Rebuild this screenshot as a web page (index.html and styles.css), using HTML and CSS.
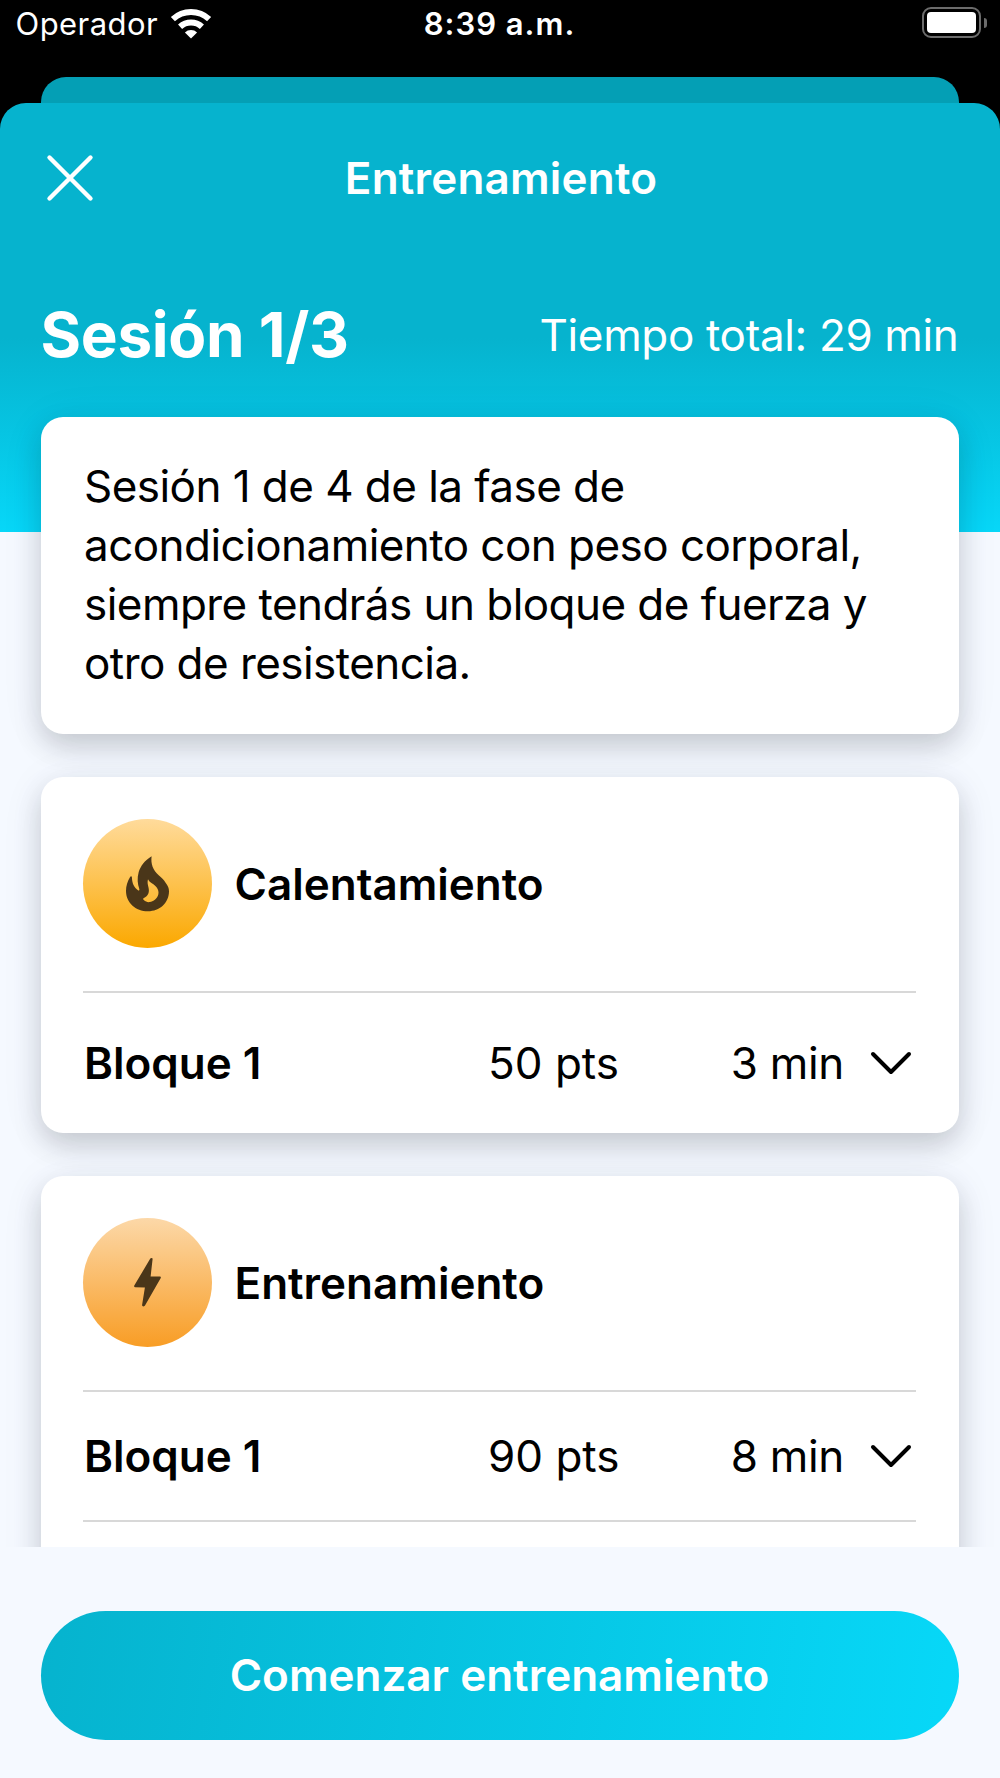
FILE: index.html
```
<!DOCTYPE html>
<html lang="es">
<head>
    <meta charset="UTF-8">
    <meta name="viewport" content="width=device-width, initial-scale=1.0">
    <title>Entrenamiento</title>
    <link rel="stylesheet" href="styles.css">
</head>
<body>
    <div class="screen">
        <div class="status-bar">
            <div class="carrier">
                <span>Operador</span>
                <svg class="wifi" width="42" height="32" viewBox="0 0 42 32">
                    <path d="M2.9 11.1a26.5 26.5 0 0 1 36.2 0M10.1 18.8a16 16 0 0 1 21.8 0" fill="none" stroke="#fff" stroke-width="6"/>
                    <path d="M21 30.5l-6.1-6.1a9 9 0 0 1 12.2 0z" fill="#fff"/>
                </svg>
            </div>
            <div class="clock">8:39 a.m.</div>
            <div class="battery">
                <div class="battery-body"><div class="battery-level"></div></div>
                <div class="battery-tip"></div>
            </div>
        </div>

        <div class="back-sheet"></div>

        <div class="sheet">
            <div class="nav">
                <svg class="close" width="48" height="48" viewBox="0 0 48 48">
                    <path d="M3.5 3.5l41 41M44.5 3.5l-41 41" stroke="#fff" stroke-width="4.4" stroke-linecap="round"/>
                </svg>
                <h1>Entrenamiento</h1>
            </div>

            <div class="content">
                <div class="session">
                    <h2>Sesión 1/3</h2>
                    <span class="total-time">Tiempo total: 29 min</span>
                </div>

                <div class="card description">
                    <p>Sesión 1 de 4 de la fase de acondicionamiento con peso corporal, siempre tendrás un bloque de fuerza y otro de resistencia.</p>
                </div>

                <div class="card">
                    <div class="card-header">
                        <div class="icon icon-warmup">
                            <svg width="43" height="56" viewBox="0 0 43 56">
                                <path fill-rule="evenodd" d="M25.6 0.2C24.6 8 27 14 32.7 19.3C36 22.4 38 24 39.6 26.7C42 30 43 32 43 35.3C43 47 33.5 55.3 22 55.3C9.5 55.3 0 46.5 0 35C0 30 1.5 25 4.1 21C4.6 20.1 5.8 20.1 5.9 21.2C6 27 8 31.5 12.3 34.5C13 34.9 13.7 34 13.3 33C11.5 28 11 22 12.7 16C14.6 10 18.5 4.5 25.6 0.2ZM22 23.3C21.2 26 21.7 28.5 22.5 31.5C23.6 36 22.5 40 17.5 42.3C16.8 43 17.2 43.6 17.8 44C19.8 45.6 21.5 46.5 24 46C29 44.8 32.5 41 32.5 36.5C32.5 32.5 29.5 29.5 26.2 27.5C24.2 26.3 23 25.3 22 23.3Z" fill="#4a3619"/>
                            </svg>
                        </div>
                        <h3>Calentamiento</h3>
                    </div>
                    <div class="block">
                        <span class="block-name">Bloque 1</span>
                        <span class="block-points">50 pts</span>
                        <span class="block-time">3 min</span>
                        <svg class="chevron" width="44" height="28" viewBox="0 0 44 28">
                            <path d="M4 5l18 18 18-18" fill="none" stroke="#000" stroke-width="4" stroke-linecap="round" stroke-linejoin="round"/>
                        </svg>
                    </div>
                </div>

                <div class="card">
                    <div class="card-header">
                        <div class="icon icon-training">
                            <svg width="27" height="49" viewBox="0 0 27 49">
                                <path d="M16 1Q16.5 0 17.5 0Q18.7 0 18.6 1L16.6 18.6L26 18.6Q27.3 18.8 26.6 20.3L11 47.6Q10.6 48.4 9.5 48.4Q7.9 48.4 8.1 47L10.9 29.4L1 29.2Q-.4 28.9 .3 27.6Z" fill="#4a3619"/>
                            </svg>
                        </div>
                        <h3>Entrenamiento</h3>
                    </div>
                    <div class="block">
                        <span class="block-name">Bloque 1</span>
                        <span class="block-points">90 pts</span>
                        <span class="block-time">8 min</span>
                        <svg class="chevron" width="44" height="28" viewBox="0 0 44 28">
                            <path d="M4 5l18 18 18-18" fill="none" stroke="#000" stroke-width="4" stroke-linecap="round" stroke-linejoin="round"/>
                        </svg>
                    </div>
                    <div class="block"></div>
                </div>
            </div>

            <div class="footer">
                <button class="start">Comenzar entrenamiento</button>
            </div>
        </div>
    </div>
</body>
</html>
```

FILE: styles.css
```
* {
    margin: 0;
    padding: 0;
    box-sizing: border-box;
}

body {
    font-family: Inter, Roboto, sans-serif;
    background: #000;
    color: #000;
}

.screen {
    width: 1000px;
    height: 1778px;
    display: flex;
    flex-direction: column;
    overflow: hidden;
    background: #000;
}

/* Status bar */
.status-bar {
    height: 76.5px;
    padding: 0 13.5px 0 15.5px;
    display: grid;
    grid-template-columns: 1fr auto 1fr;
    align-items: start;
    color: #fff;
    font-size: 31px;
    line-height: 47px;
}

.carrier {
    display: flex;
    gap: 12px;
    letter-spacing: 0.44px;
}

.wifi {
    margin-top: 7.5px;
}

.clock {
    margin-left: -3px;
    font-weight: 600;
    letter-spacing: 1px;
}

.battery {
    display: flex;
    justify-content: flex-end;
    align-items: center;
    gap: 3px;
    padding-top: 7px;
}

.battery-body {
    width: 59px;
    height: 31px;
    padding: 3px;
    border: 2px solid #6c6c6c;
    border-radius: 9px;
}

.battery-level {
    height: 100%;
    background: #fff;
    border-radius: 4px;
}

.battery-tip {
    width: 2.5px;
    height: 10px;
    background: #6c6c6c;
    border-radius: 0 3px 3px 0;
}

/* Sheets */
.back-sheet {
    height: 26.5px;
    margin: 0 41.5px 0 41px;
    background: #049fb5;
    border-radius: 25px 25px 0 0;
}

.sheet {
    flex: 1;
    display: flex;
    flex-direction: column;
    overflow: hidden;
    border-radius: 26px 26px 0 0;
    background: linear-gradient(#06b3ce 235px, #07d7f8 428.7px, #f5f9ff 428.7px);
}

.nav {
    height: 150px;
    padding: 0 46px;
    display: grid;
    grid-template-columns: 48px 1fr 48px;
    align-items: center;
    text-align: center;
    color: #fff;
}

h1 {
    padding-left: 2px;
    font-size: 44px;
    font-weight: 600;
    letter-spacing: 0.2px;
}

.content {
    height: 1293.7px;
    padding: 0 41.5px 0 40.5px;
    overflow: hidden;
}

.session {
    height: 163.5px;
    display: flex;
    justify-content: space-between;
    align-items: center;
    color: #fff;
}

h2 {
    font-size: 62px;
    font-weight: 700;
    letter-spacing: -0.3px;
}

.total-time {
    font-size: 44px;
    letter-spacing: -0.35px;
}

/* Cards */
.card {
    margin-bottom: 43px;
    padding: 0 42.5px;
    background: #fff;
    border-radius: 22px;
    box-shadow: 0 12px 28px rgba(0, 0, 0, 0.18), 0 4px 50px rgba(20, 50, 130, 0.05);
}

.description {
    height: 317px;
    padding: 40px 43.5px 0;
    font-size: 44px;
    line-height: 59px;
    letter-spacing: -0.55px;
}

.card-header {
    height: 214px;
    display: flex;
    align-items: center;
    gap: 22.5px;
}

.icon {
    width: 129px;
    height: 129px;
    display: flex;
    justify-content: center;
    align-items: center;
    border-radius: 50%;
}

.icon-warmup {
    background: linear-gradient(#ffdb9b, #fba800);
}

.icon-training {
    background: linear-gradient(#fcd8a8, #f89d25);
}

h3 {
    font-size: 44px;
    font-weight: 600;
}

.block {
    height: 130px;
    padding: 0 3px 0 1px;
    display: grid;
    grid-template-columns: 365px 1fr auto 44px;
    align-items: center;
    column-gap: 25px;
    border-top: 2px solid #d8d8d8;
    font-size: 44px;
}

.block:last-child {
    height: 142px;
}

.block-name {
    font-weight: 600;
}

.block-points {
    padding-left: 14px;
}

.block-time {
    letter-spacing: -0.3px;
}

/* Footer */
.footer {
    flex: 1;
    padding: 64.3px 41.5px 0 40.5px;
    background: #f5f9ff;
}

.start {
    width: 100%;
    height: 129px;
    border: none;
    border-radius: 65px;
    background: linear-gradient(100deg, #06b3ce, #07d8f8);
    color: #fff;
    font-family: inherit;
    font-size: 44px;
    font-weight: 600;
}
```
